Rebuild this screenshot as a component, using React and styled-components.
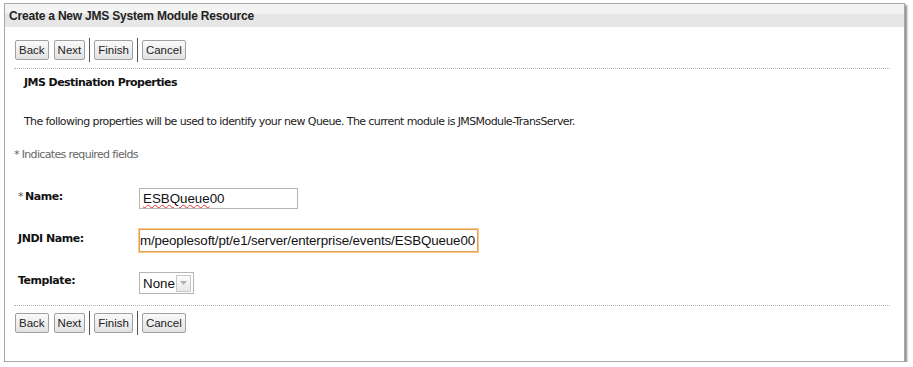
import styled, { createGlobalStyle } from "styled-components";

const Global = createGlobalStyle`
  body {
    margin: 0;
    background: #fff;
    font-family: Tahoma, "DejaVu Sans", sans-serif;
  }
`;

const Frame = styled.div`
  margin: 3px 0 0 4px;
  width: 899px;
  height: 357px;
  border: 1px solid #a8a8a8;
  box-shadow: 2px 2px 2px rgba(0, 0, 0, 0.45);
  background: #fff;
  display: flex;
  flex-direction: column;
`;

const Header = styled.div`
  height: 23px;
  padding-left: 4px;
  display: flex;
  align-items: center;
  background: linear-gradient(#f3f3f3 0, #f3f3f3 40%, #e6e6e6 45%, #e6e6e6 100%);
  font: bold 12px "Liberation Sans", Arial, sans-serif;
  letter-spacing: -0.2px;
  color: #222;
`;

const Body = styled.div`
  padding: 0 9px 0 9px;
  display: flex;
  flex-direction: column;
`;

const Toolbar = styled.div`
  display: flex;
  align-items: center;
  gap: 5px;
  padding-left: 1px;
  height: 26px;
  margin-top: ${(p) => p.$top}px;
`;

const Button = styled.button`
  margin: 0;
  height: 20px;
  padding: 0 3px;
  border: 1px solid #a0a0a0;
  border-radius: 2px;
  background: linear-gradient(#fafafa, #e2e2e2);
  font: 11.5px "Liberation Sans", Arial, sans-serif;
  color: #222;
`;

const Sep = styled.div`
  width: 1px;
  height: 24px;
  margin: 0 -1px;
  background: #555;
`;

const Dotted = styled.div`
  border-top: 1px dotted #b4b4b4;
  margin-top: ${(p) => p.$top}px;
  margin-right: 5px;
`;

const SectionTitle = styled.div`
  margin: 7px 0 0 10px;
  font: bold 11px "DejaVu Sans", Verdana, sans-serif;
  letter-spacing: -0.55px;
  color: #111;
`;

const Text = styled.div`
  margin: 26px 0 0 10px;
  font: 11px "DejaVu Sans", Verdana, sans-serif;
  letter-spacing: -0.6px;
  color: #222;
`;

const Required = styled.div`
  margin-top: 20px;
  font: 11px "DejaVu Sans", Verdana, sans-serif;
  letter-spacing: -0.65px;
  color: #666;
`;

const Row = styled.div`
  display: grid;
  grid-template-columns: 121px auto;
  align-items: start;
  margin-top: ${(p) => p.$top}px;
  padding-left: 4px;
`;

const Label = styled.div`
  font: bold 11px "DejaVu Sans", Verdana, sans-serif;
  letter-spacing: -0.45px;
  color: #111;
  padding-top: ${(p) => p.$pt || 0}px;
`;

const Star = styled.span`
  font-weight: normal;
  color: #555;
  margin-right: 2px;
`;

const Field = styled.div`
  box-sizing: border-box;
  width: ${(p) => p.$w}px;
  height: ${(p) => p.$h}px;
  border: 1px solid ${(p) => (p.$focus ? "#e8a04a" : "#b5b5b5")};
  box-shadow: ${(p) => (p.$focus ? "0 0 0 1px #f5c98e" : "none")};
  display: flex;
  align-items: center;
  justify-content: ${(p) => (p.$end ? "flex-end" : "flex-start")};
  overflow: hidden;
  white-space: nowrap;
  padding: 0 2px 0 3px;
  font: 13.33px "Liberation Sans", Arial, sans-serif;
  letter-spacing: ${(p) => (p.$end ? "-0.12px" : "0")};
  color: #111;
`;

const Spell = styled.span`
  text-decoration: underline wavy #e03030;
  text-decoration-thickness: 1px;
  text-underline-offset: 1px;
`;

const Select = styled.div`
  box-sizing: border-box;
  width: 55px;
  height: 22px;
  border: 1px solid #b5b5b5;
  display: flex;
  align-items: center;
  justify-content: space-between;
  padding: 0 2px 0 3px;
  font: 13.33px "Liberation Sans", Arial, sans-serif;
  color: #111;
`;

const Drop = styled.div`
  width: 13px;
  height: 15px;
  border: 1px solid #c8c8c8;
  background: linear-gradient(#fbfbfb, #e8e8e8);
  display: flex;
  align-items: center;
  justify-content: center;
`;

const Buttons = ({ top }) => (
  <Toolbar $top={top}>
    <Button>Back</Button>
    <Button>Next</Button>
    <Sep />
    <Button>Finish</Button>
    <Sep />
    <Button>Cancel</Button>
  </Toolbar>
);

export default function App() {
  return (
    <>
      <Global />
      <Frame>
        <Header>Create a New JMS System Module Resource</Header>
        <Body>
          <Buttons top={10} />
          <Dotted $top={5} />
          <SectionTitle>JMS Destination Properties</SectionTitle>
          <Text>
            The following properties will be used to identify your new Queue. The current module is
            JMSModule-TransServer.
          </Text>
          <Required>* Indicates required fields</Required>
          <Row $top={27}>
            <Label $pt={2}>
              <Star>*</Star>Name:
            </Label>
            <Field $w={159} $h={21}>
              <Spell>ESBQueue</Spell>00
            </Field>
          </Row>
          <Row $top={20}>
            <Label $pt={3}>JNDI Name:</Label>
            <Field $w={339} $h={23} $focus $end>
              m/peoplesoft/pt/e1/server/enterprise/events/ESBQueue00
            </Field>
          </Row>
          <Row $top={20}>
            <Label $pt={2}>Template:</Label>
            <Select>
              None
              <Drop>
                <svg width="7" height="4" viewBox="0 0 7 4">
                  <path d="M0 0h7L3.5 4z" fill="#b0b0b0" />
                </svg>
              </Drop>
            </Select>
          </Row>
          <Dotted $top={11} />
          <Buttons top={4} />
        </Body>
      </Frame>
    </>
  );
}
